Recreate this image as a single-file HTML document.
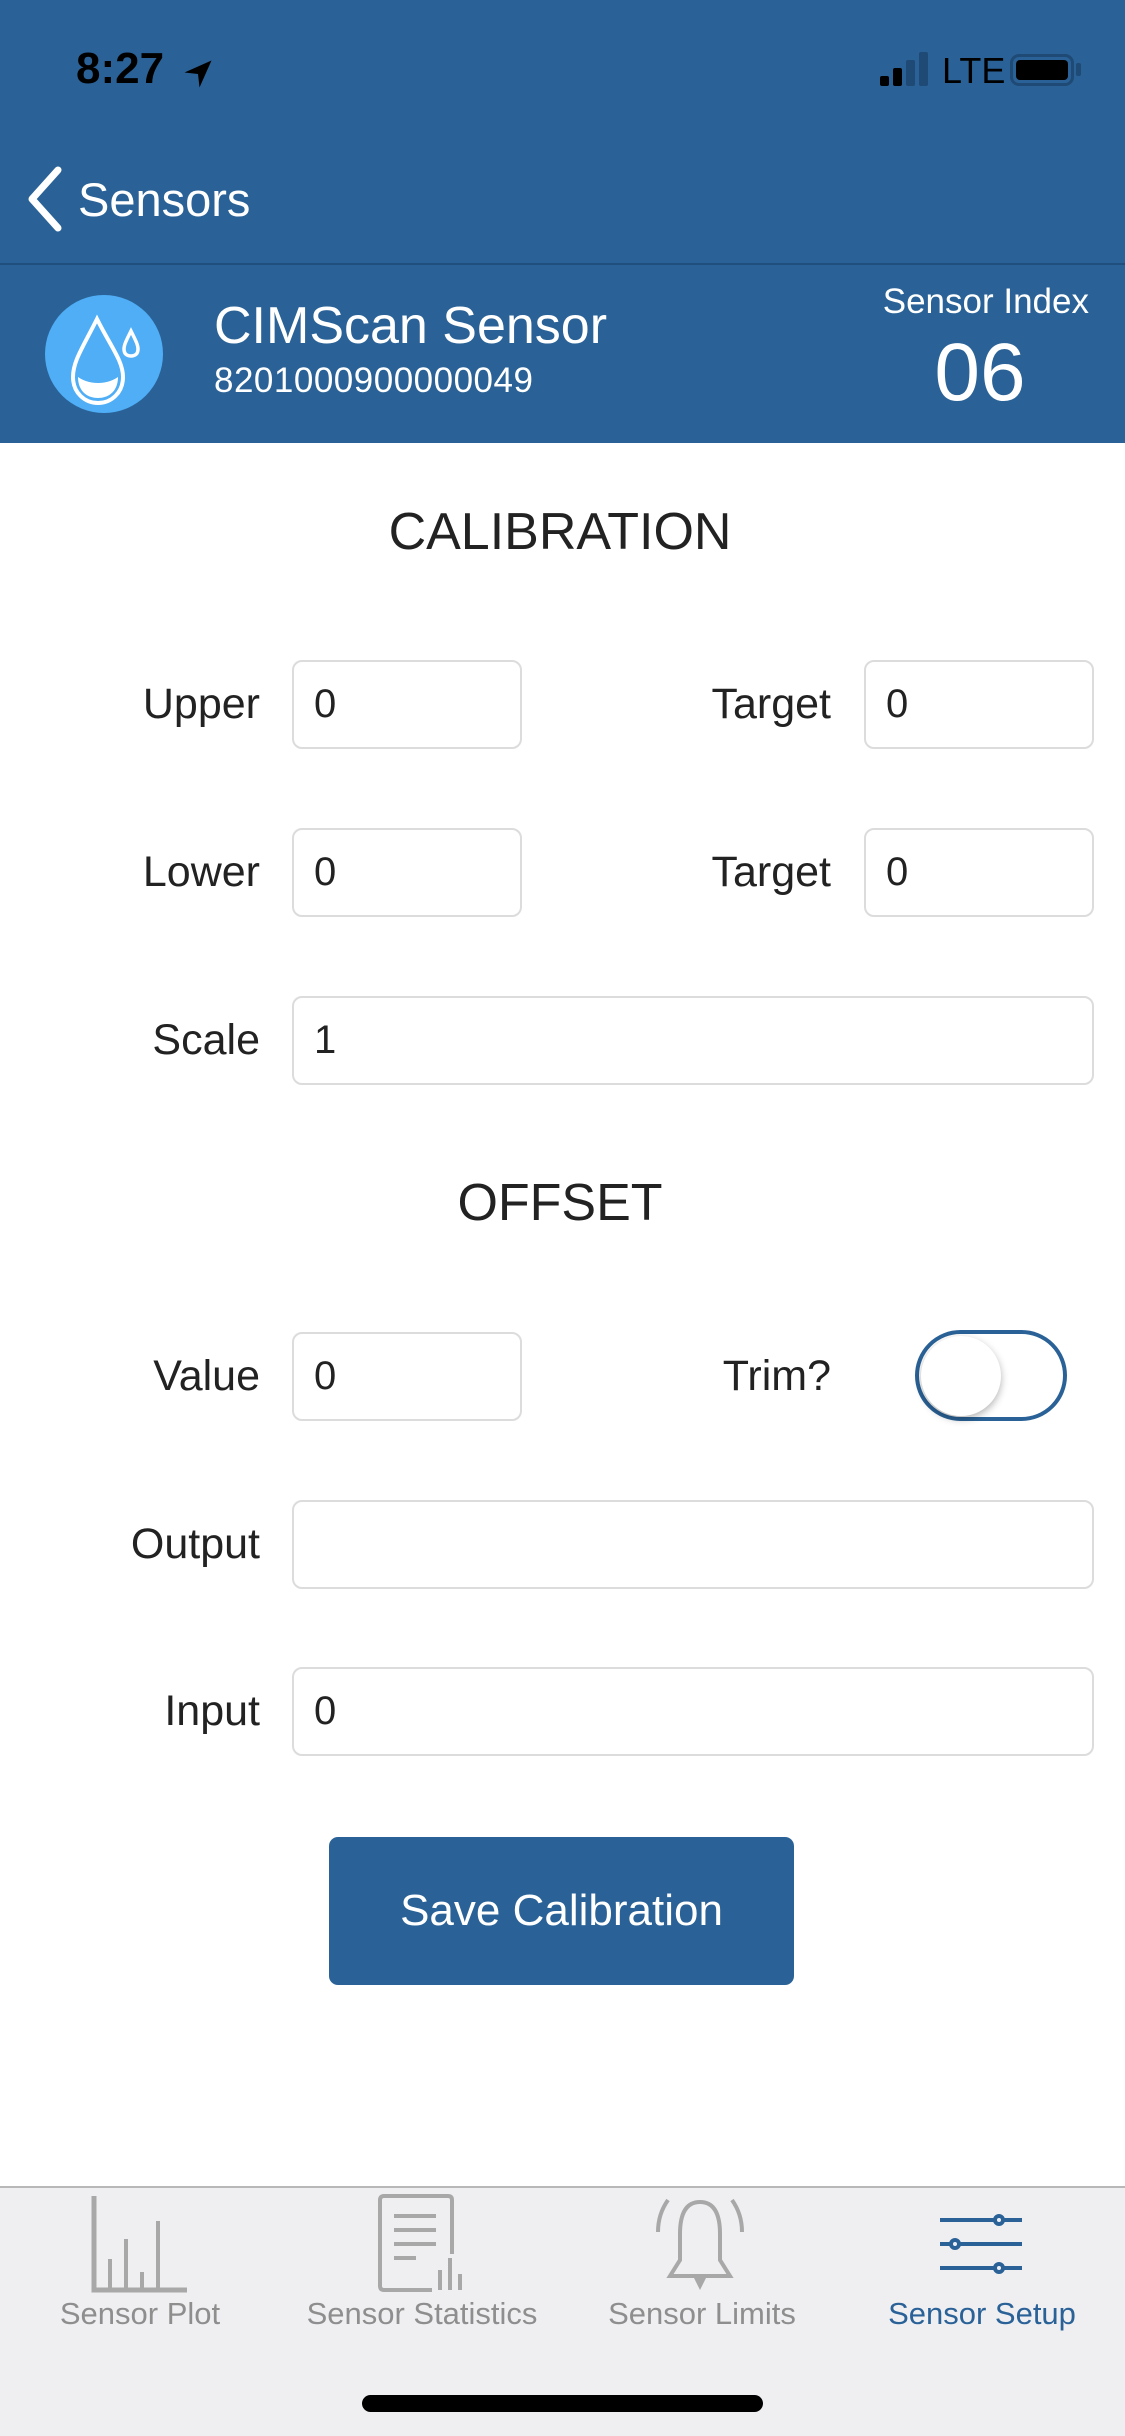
<!DOCTYPE html>
<html><head><meta charset="utf-8"><style>
*{margin:0;padding:0;box-sizing:border-box}
body{width:1125px;height:2436px;background:#fff;font-family:"Liberation Sans",sans-serif;position:relative;overflow:hidden;color:#222}
.abs{position:absolute}
.hdr{left:0;top:0;width:1125px;height:443px;background:#2A6297}
.lbl{position:absolute;font-size:43px;text-align:right;color:#222;line-height:1}
.box{position:absolute;border:2px solid #dcdcdc;border-radius:10px;font-size:40px;padding-left:20px;display:flex;align-items:center;color:#222}
.tab{position:absolute;top:2296px;font-size:31px;color:#8e8e8e;text-align:center;width:280px}
</style></head><body>
<div class="abs hdr"></div>
<div class="abs" style="left:0;top:263px;width:1125px;height:2px;background:#1f4f7e"></div>
<div class="abs" style="left:76px;top:44px;font-size:44px;font-weight:bold;color:#000">8:27</div>
<svg class="abs" style="left:180px;top:56px" width="36" height="36" viewBox="0 0 24 24"><path d="M21 3 L3 11 L12 12 L13 21 Z" fill="#000"/></svg>
<div class="abs" style="left:880px;top:76px;width:9px;height:10px;background:#000;border-radius:2px"></div>
<div class="abs" style="left:893px;top:68px;width:9px;height:18px;background:#000;border-radius:2px"></div>
<div class="abs" style="left:906px;top:60px;width:9px;height:26px;background:#1f4a75;border-radius:2px"></div>
<div class="abs" style="left:919px;top:52px;width:9px;height:34px;background:#1f4a75;border-radius:2px"></div>
<div class="abs" style="left:942px;top:50px;font-size:36px;color:#000">LTE</div>
<div class="abs" style="left:1010px;top:54px;width:64px;height:32px;border:3px solid #1f4a75;border-radius:9px;padding:3px"><div style="width:100%;height:100%;background:#000;border-radius:4px"></div></div>
<div class="abs" style="left:1076px;top:63px;width:5px;height:13px;background:#1f4a75;border-radius:2px"></div>
<svg class="abs" style="left:24px;top:166px" width="40" height="66" viewBox="0 0 40 66"><path d="M34 4 L8 33 L34 62" stroke="#fff" stroke-width="7" fill="none" stroke-linecap="round" stroke-linejoin="round"/></svg>
<div class="abs" style="left:78px;top:172px;font-size:47px;color:#fff">Sensors</div>
<svg class="abs" style="left:45px;top:295px" width="118" height="118" viewBox="0 0 118 118"><circle cx="59" cy="59" r="59" fill="#4FAEF5"/><path d="M52 24 C38 52 28 66 28 82 C28 98 40 108 53 108 C66 108 78 98 78 82 C78 66 66 52 52 24 Z" fill="none" stroke="#fff" stroke-width="4"/><path d="M33 82 C44 90 62 90 73 82 C73 96 64 103 53 103 C42 103 33 96 33 82 Z" fill="#fff"/><path d="M86 36 C81 46 79 50 79 54 C79 59 82 61 86 61 C90 61 93 59 93 54 C93 50 91 46 86 36 Z" fill="none" stroke="#fff" stroke-width="3.5"/></svg>
<div class="abs" style="left:214px;top:296px;font-size:52px;color:#fff">CIMScan Sensor</div>
<div class="abs" style="left:214px;top:361px;font-size:35px;color:#fff;letter-spacing:0.5px">8201000900000049</div>
<div class="abs" style="right:36px;top:282px;font-size:35px;color:#fff">Sensor Index</div>
<div class="abs" style="left:880px;top:326px;width:200px;text-align:center;font-size:82px;color:#fff">06</div>

<div class="abs" style="left:0;width:1120px;top:502px;text-align:center;font-size:52px">CALIBRATION</div>
<div class="lbl" style="right:865px;top:683px">Upper</div>
<div class="box" style="left:292px;top:660px;width:230px;height:89px">0</div>
<div class="lbl" style="right:294px;top:683px">Target</div>
<div class="box" style="left:864px;top:660px;width:230px;height:89px">0</div>
<div class="lbl" style="right:865px;top:851px">Lower</div>
<div class="box" style="left:292px;top:828px;width:230px;height:89px">0</div>
<div class="lbl" style="right:294px;top:851px">Target</div>
<div class="box" style="left:864px;top:828px;width:230px;height:89px">0</div>
<div class="lbl" style="right:865px;top:1019px">Scale</div>
<div class="box" style="left:292px;top:996px;width:802px;height:89px">1</div>
<div class="abs" style="left:0;width:1120px;top:1173px;text-align:center;font-size:52px">OFFSET</div>
<div class="lbl" style="right:865px;top:1355px">Value</div>
<div class="box" style="left:292px;top:1332px;width:230px;height:89px">0</div>
<div class="lbl" style="right:294px;top:1355px">Trim?</div>
<div class="abs" style="left:915px;top:1330px;width:152px;height:91px;border:4px solid #2A6297;border-radius:46px;background:#fff"></div>
<div class="abs" style="left:921px;top:1336px;width:80px;height:80px;border-radius:50%;background:#fff;box-shadow:0 3px 8px rgba(0,0,0,.3)"></div>
<div class="lbl" style="right:865px;top:1523px">Output</div>
<div class="box" style="left:292px;top:1500px;width:802px;height:89px"></div>
<div class="lbl" style="right:865px;top:1690px">Input</div>
<div class="box" style="left:292px;top:1667px;width:802px;height:89px">0</div>
<div class="abs" style="left:329px;top:1837px;width:465px;height:148px;background:#2A6297;border-radius:9px;color:#fff;font-size:44px;display:flex;align-items:center;justify-content:center">Save Calibration</div>

<div class="abs" style="left:0;top:2186px;width:1125px;height:250px;background:#EFEFF2;border-top:2px solid #b8b8b8"></div>
<svg class="abs" style="left:90px;top:2194px" width="100" height="100" viewBox="0 0 100 100"><g stroke="#a8a8a8" fill="none"><path d="M4 2 V96 H97" stroke-width="5"/><path d="M20 65V96M36 45V96M52 78V96M68 27V96" stroke-width="4"/></g></svg>
<svg class="abs" style="left:376px;top:2194px" width="100" height="100" viewBox="0 0 100 100"><g stroke="#a8a8a8" fill="none" stroke-width="4"><path d="M76 60 V6 Q76 2 72 2 H8 Q4 2 4 6 V92 Q4 96 8 96 H56"/><path d="M18 22H60M18 36H60M18 50H60M18 64H40"/><path d="M64 96V76M74 96V64M84 96V80"/></g></svg>
<svg class="abs" style="left:650px;top:2194px" width="100" height="100" viewBox="0 0 100 100"><g stroke="#a8a8a8" fill="none" stroke-width="4"><path d="M18 6 Q8 20 8 38M82 6 Q92 20 92 38"/><path d="M50 8 Q30 8 30 40 V66 L20 82 H80 L70 66 V40 Q70 8 50 8 Z"/></g><path d="M44 84 H56 L50 96 Z" fill="#a8a8a8"/></svg>
<svg class="abs" style="left:938px;top:2208px" width="88" height="72" viewBox="0 0 88 72"><g stroke="#2A6297" stroke-width="4" fill="none"><path d="M2 12H56M66 12H84M2 36H12M22 36H84M2 60H56M66 60H84"/><circle cx="61" cy="12" r="4"/><circle cx="17" cy="36" r="4"/><circle cx="61" cy="60" r="4"/></g></svg>
<div class="tab" style="left:0">Sensor Plot</div>
<div class="tab" style="left:282px">Sensor Statistics</div>
<div class="tab" style="left:562px">Sensor Limits</div>
<div class="tab" style="left:842px;color:#2A6297">Sensor Setup</div>
<div class="abs" style="left:362px;top:2395px;width:401px;height:17px;background:#000;border-radius:9px"></div>
</body></html>
